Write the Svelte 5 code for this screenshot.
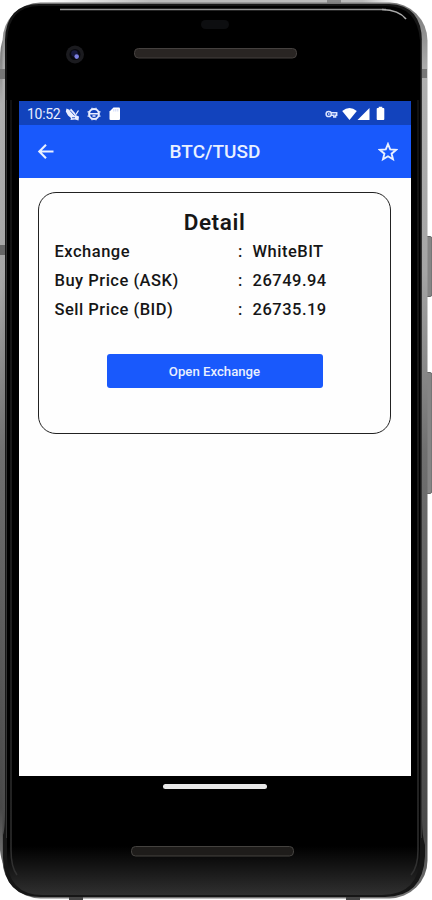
<script>
  const rows = [
    { label: 'Exchange', value: 'WhiteBIT' },
    { label: 'Buy Price (ASK)', value: '26749.94' },
    { label: 'Sell Price (BID)', value: '26735.19' }
  ];
</script>

<div class="phone">
  <svg class="frame" width="432" height="900" viewBox="0 0 432 900" aria-hidden="true">
    <defs>
      <linearGradient id="edge" x1="0" y1="0" x2="0" y2="1">
        <stop offset="0" stop-color="#777" />
        <stop offset="0.08" stop-color="#b0b0b0" />
        <stop offset="0.3" stop-color="#a5a5a5" />
        <stop offset="0.5" stop-color="#707070" />
        <stop offset="0.93" stop-color="#484848" />
        <stop offset="1" stop-color="#777" />
      </linearGradient>
      <linearGradient id="glass" x1="0" y1="0" x2="0" y2="1">
        <stop offset="0" stop-color="#000" />
        <stop offset="0.945" stop-color="#000" />
        <stop offset="1" stop-color="#303030" />
      </linearGradient>
      <linearGradient id="lower" gradientUnits="userSpaceOnUse" x1="0" y1="100" x2="0" y2="870">
        <stop offset="0" stop-color="#151515" />
        <stop offset="1" stop-color="#303030" />
      </linearGradient>
      <linearGradient id="topfade" x1="0" y1="0" x2="1" y2="0">
        <stop offset="0" stop-color="#bbb" stop-opacity="0" />
        <stop offset="0.3" stop-color="#bbb" />
        <stop offset="0.9" stop-color="#bbb" />
        <stop offset="1" stop-color="#bbb" stop-opacity="0" />
      </linearGradient>
    </defs>
    <rect x="44" y="0" width="354" height="4" fill="url(#topfade)" />
    <rect x="327" y="0" width="14" height="4" fill="#888" />
    <path d="M4 38Q0 44 0 60V850Q1 860 4 866Z" fill="url(#edge)" />
    <path d="M424 236.500H430Q432 236.500 432 239V294Q432 296.500 430 296.500H424Z" fill="#858585" stroke="#666" />
    <path d="M424 372.500H430Q432 372.500 432 375V490Q432 493.500 430 493.500H424Z" fill="#858585" stroke="#666" />
    <rect x="2.500" y="2.500" width="425" height="896" rx="38" fill="url(#edge)" />
    <path d="M39 4H389Q422 5 422 42V820Q422 835 425 845V856Q423 897 385 897H41Q4 897 3 858V835Q5 830 5 810V40Q6 4 39 4Z" fill="#161616" />
    <path d="M39 6H386Q417 6 420 40V854Q420 895 382 895H43Q7 895 7 856V40Q9 6 39 6Z" fill="url(#glass)" />
    <path d="M11 100V850Q11 867 17 875M418 100V850Q418 867 411 875" fill="none" stroke="url(#lower)" stroke-width="1.500" />
    <path d="M6.500 100V838M421.500 40V838" stroke="#333" />
    <path d="M60 9.500H386" stroke="#929292" stroke-width="1.300" />
    <path d="M382 9.500Q399 10 406 19" fill="none" stroke="#aaa" stroke-width="1.700" />
    <rect x="0" y="69" width="5" height="10" fill="#777" />
    <rect x="0" y="245" width="5" height="10" fill="#666" />
    <rect x="422" y="69" width="5" height="9" fill="#777" />
    <rect x="69" y="897" width="14" height="3" fill="#444" />
    <rect x="346" y="897" width="14" height="3" fill="#444" />
    <rect x="201" y="20" width="28" height="9" rx="4.500" fill="#0d0e10" />
    <circle cx="75" cy="54.500" r="9" fill="#1b1b1f" />
    <circle cx="75" cy="54.500" r="5.500" fill="#08080e" />
    <circle cx="74.500" cy="53.500" r="3.300" fill="#17183b" />
    <circle cx="76.700" cy="56.600" r="2.300" fill="#7b7ee0" />
    <rect x="134.500" y="48.500" width="162" height="9.500" rx="4" fill="#292523" stroke="#45413f" />
    <rect x="131.500" y="846.500" width="162" height="9.500" rx="4" fill="#1e1c1a" stroke="#44423f" />
  </svg>

  <main class="screen">
    <div class="status">
      <span class="time">10:52</span>
      <svg class="s1" width="15" height="14" viewBox="0 0 15 14" fill="#e9eeff">
        <path d="M1.500 1.500 5 3 6 1.500 10 6 10.500 8 14 9.500 13.500 13.500 10 12.500 5.500 13 6 11 3 8.500 .8 4.500Z" />
        <path d="M10.500 8 13.500 3.500" stroke="#e9eeff" stroke-width="1.300" />
        <path d="M5 3.500 9.500 8.500M7 10.700H10" stroke="#1243bd" stroke-width=".8" />
      </svg>
      <svg class="s2" width="14" height="14" viewBox="0 0 14 14" fill="none" stroke="#e9eeff">
        <circle cx="7" cy="7" r="4.900" stroke-width="2" />
        <path d="M.5 4.800H3M.5 9.200H3M11 4.800H13.500M11 9.200H13.500M5 .8V3M9 .8V3M5 11V13.200M9 11V13.200" stroke-width="1.200" />
        <path d="M3 6.700H11M5.500 9H8.500" stroke-width="1.500" />
      </svg>
      <svg class="s3" width="12" height="14" viewBox="0 0 12 14">
        <path d="M4.500 .5H10Q11 .5 11 1.500V12Q11 13 10 13H1.500Q.5 13 .5 12V4.500Z" fill="#fff" />
        <path d="M4.800 2V4.500M6.800 2V4.500M8.800 2V4.500" stroke="#bdccf5" stroke-width=".8" />
      </svg>
      <span class="gap"></span>
      <svg width="13" height="14" viewBox="0 0 13 14" fill="none" stroke="#dce5ff" stroke-width="1.500">
        <circle cx="3.700" cy="7" r="2.600" />
        <path d="M6 5.700H11.700V8.300H10.600V10H8.800V8.300H6" />
        <path d="M3 7H4.500" />
      </svg>
      <svg class="wifi" width="15" height="14" viewBox="0 0 15 14"><path d="M.2 4Q7.500-2 14.800 4L7.500 13Z" fill="#fff" /></svg>
      <svg width="13" height="14" viewBox="0 0 13 14"><path d="M.5 13 12.500 1V13Z" fill="#fff" /></svg>
      <svg class="batt" width="9" height="15" viewBox="0 0 9 15"><path d="M2.700 .7H6.300V2H7.500Q8.300 2 8.300 3V13Q8.300 14 7.500 14H1.500Q.7 14 .7 13V3Q.7 2 1.500 2H2.700Z" fill="#fff" /></svg>
    </div>

    <header>
      <svg width="18" height="18" viewBox="0 0 18 18" fill="none" stroke="#e9f0ff" stroke-width="2.100"><path d="M16.500 8.500H2.500M9 1.800 2.300 8.500 9 15.200" /></svg>
      <h1>BTC/TUSD</h1>
      <svg width="20" height="20" viewBox="0 0 20 20" fill="none" stroke="#e9f0ff" stroke-width="1.900"><path d="M10 2 12.200 7.400 18 7.900 13.600 11.700 15 17.300 10 14.300 5 17.300 6.400 11.700 2 7.900 7.800 7.400Z" /></svg>
    </header>

    <section class="card">
      <h2>Detail</h2>
      {#each rows as row}
        <div class="row">
          <span class="label">{row.label}</span>
          <span class="colon">:</span>
          <span>{row.value}</span>
        </div>
      {/each}
      <button>Open Exchange</button>
    </section>
  </main>
  <div class="home"></div>
</div>

<style>
  :global(body) { background: #fff; overflow: hidden; }
  .phone {
    position: relative;
    box-sizing: border-box;
    width: 432px;
    height: 900px;
    padding: 101px 21px 0 19px;
    font-family: Roboto, sans-serif;
    font-weight: 500;
    color: #161616;
  }
  .frame { position: absolute; inset: 0; }
  svg { display: block; flex: none; }
  .screen { position: relative; height: 674.500px; background: #fefefe; overflow: hidden; }
  .status {
    display: flex;
    align-items: center;
    box-sizing: border-box;
    height: 24px;
    padding: 1px 26px 0 8px;
    background: #1243bd;
    color: #e9eeff;
  }
  .time { width: 35px; font-size: 14px; font-weight: 400; letter-spacing: -.3px; white-space: nowrap; }
  .s1 { margin-left: 3px; }
  .s2 { margin-left: 7px; }
  .s3 { margin-left: 8px; }
  .gap { flex: 1; }
  .wifi { margin-left: 4px; }
  .batt { margin-left: 6px; }
  header {
    display: flex;
    align-items: center;
    justify-content: space-between;
    box-sizing: border-box;
    height: 53px;
    padding: 0 13px 0 18px;
    background: #1959fc;
  }
  h1 { margin: 0 3px 0 0; font-size: 19px; font-weight: 500; line-height: 24px; color: #e9f0ff; }
  .card {
    display: flex;
    flex-direction: column;
    box-sizing: border-box;
    width: 353px;
    height: 242px;
    margin: 14px 0 0 19px;
    padding: 15px 15px 0;
    border: 1.500px solid #222;
    border-radius: 18px;
  }
  h2 { margin: 0; font-size: 22.500px; line-height: 29px; font-weight: 600; text-align: center; letter-spacing: .6px; }
  .row { display: flex; height: 29.200px; align-items: center; padding-left: .5px; font-size: 16.500px; letter-spacing: .5px; white-space: nowrap; }
  .label { width: 183.500px; }
  .colon { width: 14.500px; }
  button {
    align-self: center;
    width: 216px;
    height: 34px;
    margin-top: 29px;
    padding: 1px 0 0;
    border: 0;
    border-radius: 3px;
    background: #1959fc;
    color: #e9f0ff;
    font: 500 13.200px Roboto, sans-serif;
  }
  .home { position: relative; width: 104px; height: 5px; margin: 8.500px 0 0 144px; border-radius: 3px; background: #e8e8e8; }
</style>
